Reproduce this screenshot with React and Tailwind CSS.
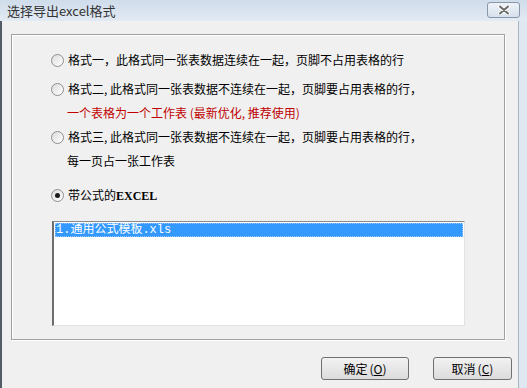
const cjk = { fontFamily: '"Noto Sans CJK SC", "Liberation Sans", sans-serif' };

function Radio({ checked }) {
  return (
    <span className="w-[13px] h-[13px] rounded-full border border-[#8e8f8f] bg-gradient-to-br from-[#dcdcdc] to-white flex items-center justify-center shrink-0">
      {checked && <span className="w-[5px] h-[5px] rounded-full bg-[#1a1a1a]" />}
    </span>
  );
}

function Btn({ label, hot, width }) {
  return (
    <button
      className={`${width} h-[23px] rounded-[3px] border border-[#707070] bg-gradient-to-b from-[#f2f2f2] to-[#dcdcdc] text-[12px] text-black flex items-center justify-center`}
      style={cjk}
    >
      {label}
      <span className="ml-[2px]">(</span>
      <span className="underline">{hot}</span>
      <span>)</span>
    </button>
  );
}

export default function App() {
  return (
    <div className="w-[527px] h-[388px] flex flex-col bg-[#dfe7f0] overflow-hidden text-[12px] text-black" style={cjk}>
      {/* title bar */}
      <div className="h-[21px] shrink-0 flex items-center justify-between pl-[7px] pr-[7px] bg-gradient-to-b from-[#cfdcea] to-[#e2eaf4]">
        <span className="text-[13px] text-[#333] leading-none">选择导出excel格式</span>
        <div className="w-[33px] h-[16px] rounded-[3px] border border-[#8897a8] bg-gradient-to-b from-[#eef3f9] to-[#d6e0ec] flex items-center justify-center mt-[-1px]">
          <svg width="14" height="10" viewBox="0 0 14 10">
            <path d="M3 1.5 L11 8.5 M11 1.5 L3 8.5" stroke="#ffffff" strokeWidth="4" strokeLinecap="round" />
            <path d="M3 1.5 L11 8.5 M11 1.5 L3 8.5" stroke="#6a6a6a" strokeWidth="2" strokeLinecap="round" />
          </svg>
        </div>
      </div>

      {/* body */}
      <div className="flex-1 flex">
        <div className="flex-1 flex flex-col bg-[#f0f0f0] border-l-2 border-[#535b64] border-r border-r-[#a9b4c0]">
          {/* group box */}
          <div className="ml-[9px] mt-[13px] w-[494px] h-[306px] border border-[#a0a0a0] shadow-[inset_1px_1px_0_#ffffff,1px_1px_0_#ffffff] flex flex-col pl-[39px]">
            <div className="h-[20px] mt-[15px] flex items-center gap-[4px]">
              <Radio />
              <span>格式一，此格式同一张表数据连续在一起，页脚不占用表格的行</span>
            </div>
            <div className="h-[20px] mt-[9px] flex items-center gap-[4px]">
              <Radio />
              <span>格式二, 此格式同一张表数据不连续在一起，页脚要占用表格的行，</span>
            </div>
            <div className="h-[20px] mt-[4px] flex items-center pl-[16px] text-[#c00000]">
              一个表格为一个工作表 (最新优化, 推荐使用)
            </div>
            <div className="h-[20px] mt-[4px] flex items-center gap-[4px]">
              <Radio />
              <span>格式三, 此格式同一张表数据不连续在一起，页脚要占用表格的行，</span>
            </div>
            <div className="h-[20px] mt-[4px] flex items-center pl-[16px]">每一页占一张工作表</div>
            <div className="h-[20px] mt-[14px] flex items-center gap-[4px]">
              <Radio checked />
              <span>
                带公式的<span className="font-bold" style={{ fontFamily: '"Liberation Serif", serif' }}>EXCEL</span>
              </span>
            </div>
            {/* list box */}
            <div className="mt-[16px] ml-[1px] w-[413px] h-[105px] bg-white border-l-2 border-t border-l-[#6e6e6e] border-t-[#8a8a8a] border-r border-b border-r-[#e3e3e3] border-b-[#e3e3e3] p-[1px]">
              <div
                className="h-[14px] bg-[#3399ff] text-white text-[12px] leading-[14px] pl-[1px] outline-1 outline-dotted outline-[#9cc7f5] outline-offset-[-1px]"
                style={{ fontFamily: '"Liberation Mono", "Noto Sans CJK SC", monospace' }}
              >
                1.通用公式模板.xls
              </div>
            </div>
          </div>

          {/* buttons */}
          <div className="mt-[17px] flex pl-[319px] gap-[24px]">
            <Btn label="确定" hot="O" width="w-[88px]" />
            <Btn label="取消" hot="C" width="w-[79px]" />
          </div>
        </div>
        <div className="w-[8px] shrink-0 bg-[#dfe7f0]" />
      </div>
    </div>
  );
}
